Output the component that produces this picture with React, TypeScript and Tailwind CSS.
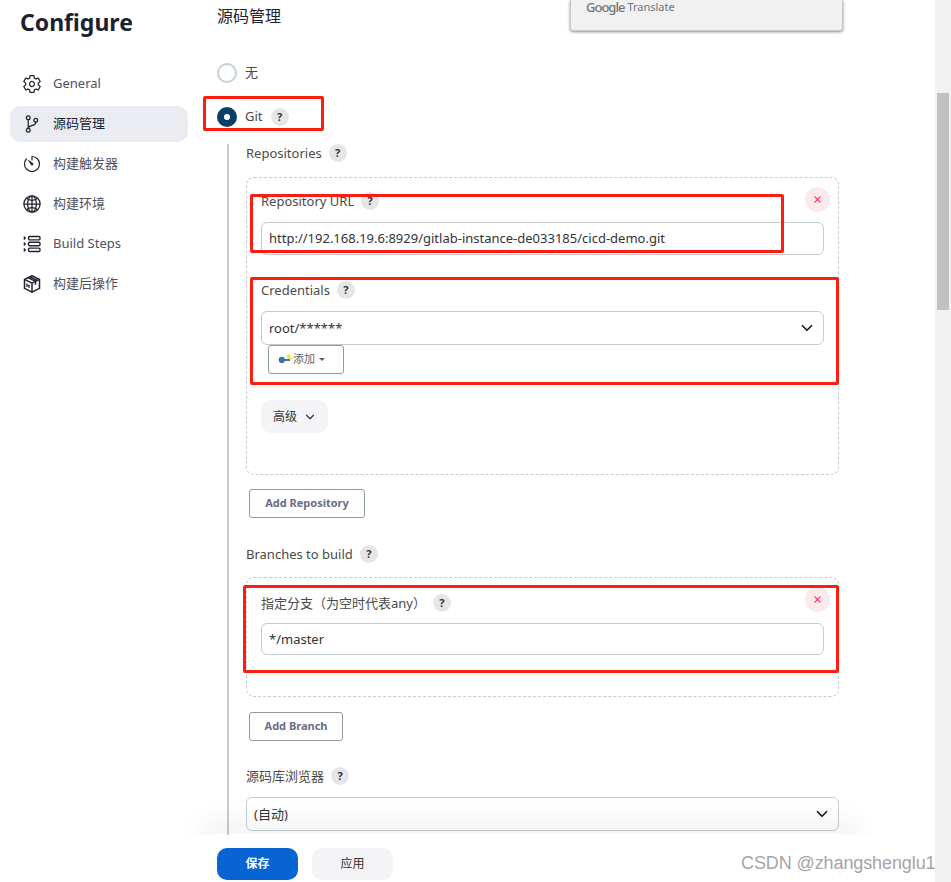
import { ChevronDown, X } from 'lucide-react';
import {
  IoGitBranchOutline,
  IoGlobeOutline,
  IoSettingsOutline,
  IoTimerOutline,
} from 'react-icons/io5';
import type { ReactNode } from 'react';

const StepsIcon = () => (
  <svg viewBox="0 0 20 20" className="w-5 h-5" fill="none" stroke="#1f2430" strokeWidth="1.4">
    <rect x="6.5" y="2.5" width="11.5" height="3.4" rx="1.2" />
    <rect x="6.5" y="8.3" width="11.5" height="3.4" rx="1.2" />
    <rect x="6.5" y="14.1" width="11.5" height="3.4" rx="1.2" />
    <path d="M2 2.5l2 1.6-2 1.6zM2 8.4l2 1.6-2 1.6zM2 14.3l2 1.6-2 1.6z" fill="#1f2430" strokeWidth="0.6" />
  </svg>
);

const PackageIcon = () => (
  <svg viewBox="0 0 20 20" className="w-5 h-5" fill="none" stroke="#1f2430" strokeWidth="1.5" strokeLinejoin="round">
    <path d="M10 1.8l7.5 3.6v9L10 18.2 2.5 14.4v-9z" />
    <path d="M2.5 5.4L10 9.2l7.5-3.8M10 9.2v9" />
    <path d="M6 3.6l7.5 3.8v3.4M8 2.8l7.5 3.7" />
    <path d="M5 9.8v3M7 10.8v3" />
  </svg>
);

const navItems: { label: string; icon: ReactNode; active?: boolean }[] = [
  { label: 'General', icon: <IoSettingsOutline className="w-5 h-5" /> },
  { label: '源码管理', icon: <IoGitBranchOutline className="w-5 h-5" />, active: true },
  { label: '构建触发器', icon: <IoTimerOutline className="w-5 h-5" /> },
  { label: '构建环境', icon: <IoGlobeOutline className="w-5 h-5" /> },
  { label: 'Build Steps', icon: <StepsIcon /> },
  { label: '构建后操作', icon: <PackageIcon /> },
];

const Help = () => (
  <span className="flex items-center justify-center w-[18px] h-[18px] rounded-full bg-[#e6e6e8] text-[11px] font-bold text-[#333]">
    ?
  </span>
);

const FieldLabel = ({ text }: { text: string }) => (
  <div className="flex items-center gap-[7px] h-[18px] text-[13px] leading-[18px] text-[#4a4a4a]">
    <span>{text}</span>
    <Help />
  </div>
);

const TextBox = ({ value, select, height = 'h-[33px]' }: { value: string; select?: boolean; height?: string }) => (
  <div className={`flex items-center justify-between ${height} pl-[7px] pr-[7px] bg-white border border-[#c3ccd1] rounded-md text-[13px] text-[#333]`}>
    <span className={height === 'h-[33px]' ? '' : 'pt-[2px]'}>{value}</span>
    {select && <ChevronDown className="w-[18px] h-[18px] text-[#14141f]" strokeWidth={2.2} />}
  </div>
);

const RemoveButton = () => (
  <span className="absolute right-[8px] top-[9px] flex items-center justify-center w-[25px] h-[25px] rounded-full bg-[#fbe9eb]">
    <X className="w-[11px] h-[11px] text-[#e6173d]" strokeWidth={2.2} />
  </span>
);

const OutlineButton = ({ text, width }: { text: string; width: string }) => (
  <button className={`${width} h-[29px] ml-[3px] flex items-center justify-center bg-white border border-[#8f9ba3] rounded-[3px] text-[11px] font-bold text-[#6a6d85]`}>
    {text}
  </button>
);

const KeyIcon = () => (
  <svg viewBox="0 0 16 12" className="w-[15px] h-[11px]">
    <circle cx="4" cy="6.5" r="3.4" fill="#3f72ad" />
    <rect x="6" y="5.4" width="7" height="2.2" fill="#3f72ad" />
    <circle cx="11.5" cy="2.6" r="2.2" fill="#f5e34a" />
    <rect x="12" y="4" width="4" height="1.4" fill="#f5e34a" />
  </svg>
);

const AnnotationBox = ({ className }: { className: string }) => (
  <div className={`absolute border-[3px] border-[#fb1d12] rounded-[2px] pointer-events-none ${className}`} />
);

export default function App() {
  return (
    <div className="relative h-[882px] overflow-hidden bg-white flex font-['Noto_Sans','Noto_Sans_CJK_SC',sans-serif]">
      <aside className="w-[217px] shrink-0 pl-[10px] pr-[29px]">
        <h1 className="pl-[10px] pt-[5px] h-[66px] text-[23px] leading-[34px] font-bold text-[#1c2130]">Configure</h1>
        <nav className="flex flex-col gap-1">
          {navItems.map((item) => (
            <a
              key={item.label}
              className={`flex items-center gap-[11px] h-9 pl-3 rounded-[10px] text-[13px] ${
                item.active ? 'bg-[#eaecf2] text-[#1c2130]' : 'text-[#4d5160]'
              }`}
            >
              <span className="flex w-5 h-5 text-[#1f2430]">{item.icon}</span>
              {item.label}
            </a>
          ))}
        </nav>
      </aside>

      <main className="w-[622px] shrink-0">
        <h2 className="h-[63px] pt-[3px] text-[16px] leading-[26px] text-[#1c2130]">源码管理</h2>
        <div className="flex items-center gap-2 h-5 text-[13px] text-[#4a4a4a]">
          <span className="w-5 h-5 rounded-full border-2 border-[#c6d0d5] bg-white" />
          <span>无</span>
        </div>
        <div className="flex items-center gap-2 h-5 mt-6 text-[13px] text-[#4a4a4a]">
          <span className="flex items-center justify-center w-5 h-5 rounded-full bg-[#0b3f66]">
            <span className="w-[6px] h-[6px] rounded-full bg-white" />
          </span>
          <span>Git</span>
          <Help />
        </div>

        <div className="ml-[10px] mt-[17px] pl-[17px] border-l-2 border-[#c3ccd1] h-[800px]">
          <FieldLabel text="Repositories" />
          <div className="relative mt-[15px] h-[298px] px-[14px] pt-[14px] border border-dashed border-[#c3ccd1] rounded-lg">
            <RemoveButton />
            <FieldLabel text="Repository URL" />
            <div className="mt-[12px]">
              <TextBox value="http://192.168.19.6:8929/gitlab-instance-de033185/cicd-demo.git" />
            </div>
            <div className="mt-[26px]">
              <FieldLabel text="Credentials" />
            </div>
            <div className="mt-[12px]">
              <TextBox value="root/******" select height="h-[34px]" />
            </div>
            <button className="flex items-center ml-[7px] w-[76px] h-[29px] pl-[9px] bg-white border border-[#8f9ba3] rounded-[3px] text-[11px] text-[#5a5f70]">
              <KeyIcon />
              添加
              <span className="ml-[4px] border-x-[3px] border-x-transparent border-t-[3px] border-t-[#5a5f70]" />
            </button>
            <button className="flex items-center gap-[6px] mt-[26px] pl-3 pr-[11px] h-[33px] rounded-[10px] bg-[#f4f4f7] text-[12px] text-[#333]">
              高级
              <ChevronDown className="w-[14px] h-[14px]" />
            </button>
          </div>

          <div className="mt-[14px]">
            <OutlineButton text="Add Repository" width="w-[116px]" />
          </div>

          <div className="mt-[27px]">
            <FieldLabel text="Branches to build" />
          </div>
          <div className="relative mt-[14px] h-[120px] px-[14px] pt-[16px] border border-dashed border-[#c3ccd1] rounded-lg">
            <RemoveButton />
            <FieldLabel text="指定分支（为空时代表any）" />
            <div className="mt-[11px]">
              <TextBox value="*/master" height="h-[32px]" />
            </div>
          </div>

          <div className="mt-[15px]">
            <OutlineButton text="Add Branch" width="w-[94px]" />
          </div>

          <div className="mt-[26px]">
            <FieldLabel text="源码库浏览器" />
          </div>
          <div className="mt-[12px]">
            <TextBox value="(自动)" select height="h-[34px]" />
          </div>
        </div>
      </main>

      {/* translate popup clipped by the top of the window */}
      <div className="absolute left-[570px] top-0 w-[273px] h-[31px] flex items-center gap-[3px] pl-[15px] pb-[16px] bg-[#f1f1f1] border border-t-0 border-[#c8c8c8] rounded-b-[3px] shadow-[0_1px_3px_rgba(0,0,0,0.45)] text-[#70757a] text-[13px] leading-[14px]">
        <span className="block font-medium tracking-[-1px]">Google</span>
        <span className="block text-[11px]">Translate</span>
      </div>

      {/* soft shadow the save bar drops on the form */}
      <div className="absolute left-[215px] bottom-[47px] w-[630px] h-px shadow-[0_0_24px_14px_rgba(0,0,0,0.05)]" />

      {/* save bar */}
      <div className="absolute left-0 right-[16px] bottom-0 h-[47px] bg-white">
        <div className="flex gap-[14px] pl-[217px] pt-[13px]">
          <button className="w-[81px] h-8 rounded-[10px] bg-[#0764d2] text-[12px] font-bold text-white">保存</button>
          <button className="w-[81px] h-8 rounded-[10px] bg-[#f4f4f7] text-[12px] text-[#333]">应用</button>
        </div>
      </div>

      {/* scrollbar */}
      <div className="absolute right-0 top-0 bottom-0 w-[16px] pt-[93px] px-[2px] bg-[#f1f1f1]">
        <div className="h-[217px] bg-[#c1c1c1]" />
      </div>

      <span className="absolute left-[741px] top-[851px] text-[18px] leading-[24px] tracking-[-0.1px] text-[#a5a5a5] font-['Liberation_Sans',sans-serif]">
        CSDN @zhangshenglu1
      </span>

      <AnnotationBox className="left-[203px] top-[96px] w-[121px] h-[35px]" />
      <AnnotationBox className="left-[250px] top-[194px] w-[534px] h-[59px]" />
      <AnnotationBox className="left-[250px] top-[277px] w-[589px] h-[108px]" />
      <AnnotationBox className="left-[243px] top-[585px] w-[596px] h-[88px]" />
    </div>
  );
}
